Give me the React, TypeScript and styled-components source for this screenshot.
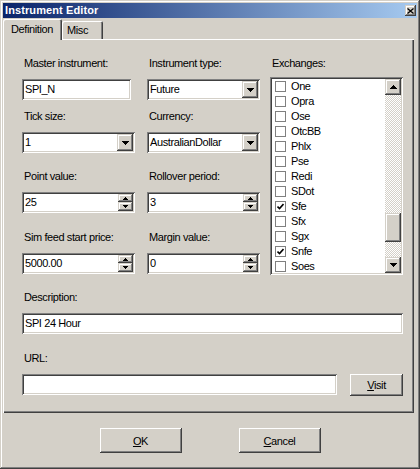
import React from 'react';
import styled, { createGlobalStyle } from 'styled-components';

const FACE = '#d4d0c8';
const SHADOW = '#808080';
const DARK = '#404040';
const LIGHT = '#ffffff';

const raised = `box-shadow: inset -1px -1px ${DARK}, inset 1px 1px ${LIGHT}, inset -2px -2px ${SHADOW}, inset 2px 2px ${FACE};`;
const raisedSmall = `box-shadow: inset -1px -1px ${DARK}, inset 1px 1px ${FACE}, inset -2px -2px ${SHADOW}, inset 2px 2px ${LIGHT};`;
const sunken = `box-shadow: inset 1px 1px ${SHADOW}, inset -1px -1px ${LIGHT}, inset 2px 2px ${DARK}, inset -2px -2px ${FACE};`;

const GlobalStyle = createGlobalStyle`
  html, body {
    margin: 0;
    padding: 0;
    background: ${FACE};
    overflow: hidden;
  }
  * {
    box-sizing: border-box;
  }
`;

const Window = styled.div`
  width: 420px;
  height: 469px;
  padding: 3px;
  display: flex;
  flex-direction: column;
  background: ${FACE};
  box-shadow: inset -1px -1px ${DARK}, inset 1px 1px ${FACE}, inset -2px -2px ${SHADOW}, inset 2px 2px ${LIGHT};
  font-family: "Liberation Sans", Arial, sans-serif;
  font-size: 11px;
  letter-spacing: -0.4px;
  color: #000;
`;

const TitleBar = styled.div`
  height: 15px;
  display: flex;
  align-items: center;
  justify-content: space-between;
  padding: 0 1px 0 2px;
  background: linear-gradient(to right, #0a246a, #a6caf0);
`;

const TitleText = styled.span`
  color: #fff;
  font-weight: bold;
  letter-spacing: 0.1px;
  line-height: 13px;
`;

const CloseBox = styled.div`
  width: 11px;
  height: 11px;
  display: flex;
  align-items: center;
  justify-content: center;
  background: ${FACE};
  ${raisedSmall}
`;

const TabStrip = styled.div`
  height: 20px;
  margin-top: 1px;
  display: flex;
  align-items: flex-end;
`;

const Tab = styled.div<{ $active?: boolean }>`
  position: relative;
  z-index: ${p => (p.$active ? 2 : 1)};
  width: ${p => (p.$active ? 59 : 41)}px;
  height: ${p => (p.$active ? 21 : 18)}px;
  margin-bottom: ${p => (p.$active ? -1 : 0)}px;
  padding: ${p => (p.$active ? '4px 0 0 8px' : '3px 0 0 5px')};
  line-height: 13px;
  background: ${FACE};
  border-radius: 2px 2px 0 0;
  box-shadow: inset 1px 1px ${LIGHT}, inset -1px 0 ${DARK}, inset -2px 0 ${SHADOW};
`;

const Panel = styled.div`
  width: 411px;
  height: 374px;
  padding: 18px 0 0 19px;
  display: flex;
  flex-direction: column;
  box-shadow: inset 1px 1px ${LIGHT}, inset -1px -1px ${DARK}, inset -2px -2px ${SHADOW};
`;

const Columns = styled.div`
  display: flex;
`;

const Column = styled.div<{ $w: number }>`
  width: ${p => p.$w}px;
  display: flex;
  flex-direction: column;
`;

const Group = styled.div<{ $gap?: number }>`
  display: flex;
  flex-direction: column;
  margin-top: ${p => p.$gap ?? 0}px;
`;

const Label = styled.span<{ $space?: number }>`
  display: block;
  line-height: 13px;
  padding-left: 2px;
  margin-bottom: ${p => p.$space ?? 9}px;
  white-space: nowrap;
`;

const TextBox = styled.div<{ $w: number }>`
  width: ${p => p.$w}px;
  height: 21px;
  padding: 2px 3px;
  line-height: 17px;
  background: #fff;
  white-space: nowrap;
  overflow: hidden;
  ${sunken}
`;

const Field = styled.div<{ $w: number }>`
  width: ${p => p.$w}px;
  height: 21px;
  padding: 2px;
  display: flex;
  background: #fff;
  ${sunken}
`;

const FieldValue = styled.span`
  flex: 1;
  padding-left: 1px;
  line-height: 17px;
  white-space: nowrap;
  overflow: hidden;
`;

const DropButton = styled.div`
  width: 16px;
  height: 17px;
  display: flex;
  align-items: center;
  justify-content: center;
  background: ${FACE};
  ${raisedSmall}
`;

const SpinButtons = styled.div`
  width: 15px;
  display: flex;
  flex-direction: column;
`;

const SpinButton = styled.div<{ $h: number }>`
  height: ${p => p.$h}px;
  display: flex;
  align-items: center;
  justify-content: center;
  background: ${FACE};
  ${raisedSmall}
`;

const ListBox = styled.div`
  width: 133px;
  height: 198px;
  padding: 2px;
  display: flex;
  background: #fff;
  ${sunken}
`;

const Items = styled.div`
  flex: 1;
  overflow: hidden;
`;

const Item = styled.div`
  height: 15px;
  display: flex;
  align-items: center;
  gap: 5px;
  padding-left: 3px;
  line-height: 15px;
`;

const CheckBox = styled.span`
  width: 11px;
  height: 11px;
  display: flex;
  align-items: center;
  justify-content: center;
  border: 1px solid ${SHADOW};
  background: #fff;
`;

const ScrollBar = styled.div`
  width: 16px;
  display: flex;
  flex-direction: column;
`;

const ScrollButton = styled.div`
  height: 16px;
  display: flex;
  align-items: center;
  justify-content: center;
  background: ${FACE};
  ${raisedSmall}
`;

const Track = styled.div`
  flex: 1;
  display: flex;
  flex-direction: column;
  background: repeating-conic-gradient(${FACE} 0 25%, ${LIGHT} 0 50%) 0 0 / 2px 2px;
`;

const Thumb = styled.div<{ $top: number }>`
  height: 29px;
  margin-top: ${p => p.$top}px;
  background: ${FACE};
  ${raisedSmall}
`;

const Row = styled.div`
  display: flex;
  align-items: flex-start;
  gap: 13px;
`;

const PushButton = styled.div<{ $w: number; $h: number }>`
  width: ${p => p.$w}px;
  height: ${p => p.$h}px;
  display: flex;
  align-items: center;
  justify-content: center;
  background: ${FACE};
  ${raised}
`;

const Footer = styled.div`
  padding-top: 15px;
  display: flex;
  justify-content: center;
  gap: 57px;
`;

const Arrow = ({ dir }: { dir: 'up' | 'down' }) => (
  <svg width="7" height="4" viewBox="0 0 7 4" shapeRendering="crispEdges">
    {dir === 'down' ? (
      <polygon points="0,0 7,0 3.5,4" fill="#000" />
    ) : (
      <polygon points="0,4 7,4 3.5,0" fill="#000" />
    )}
  </svg>
);

const TinyArrow = ({ dir }: { dir: 'up' | 'down' }) => (
  <svg width="5" height="3" viewBox="0 0 5 3" shapeRendering="crispEdges">
    {dir === 'down' ? (
      <polygon points="0,0 5,0 2.5,3" fill="#000" />
    ) : (
      <polygon points="0,3 5,3 2.5,0" fill="#000" />
    )}
  </svg>
);

const Combo = ({ w, value }: { w: number; value: string }) => (
  <Field $w={w}>
    <FieldValue>{value}</FieldValue>
    <DropButton>
      <Arrow dir="down" />
    </DropButton>
  </Field>
);

const Spin = ({ w, value }: { w: number; value: string }) => (
  <Field $w={w}>
    <FieldValue style={{ paddingLeft: 1 }}>{value}</FieldValue>
    <SpinButtons>
      <SpinButton $h={8}>
        <TinyArrow dir="up" />
      </SpinButton>
      <SpinButton $h={9}>
        <TinyArrow dir="down" />
      </SpinButton>
    </SpinButtons>
  </Field>
);

const exchanges = [
  { name: 'One', checked: false },
  { name: 'Opra', checked: false },
  { name: 'Ose', checked: false },
  { name: 'OtcBB', checked: false },
  { name: 'Phlx', checked: false },
  { name: 'Pse', checked: false },
  { name: 'Redi', checked: false },
  { name: 'SDot', checked: false },
  { name: 'Sfe', checked: true },
  { name: 'Sfx', checked: false },
  { name: 'Sgx', checked: false },
  { name: 'Snfe', checked: true },
  { name: 'Soes', checked: false },
];

export default function App() {
  return (
    <>
      <GlobalStyle />
      <Window>
        <TitleBar>
          <TitleText>Instrument Editor</TitleText>
          <CloseBox>
            <svg width="7" height="6" viewBox="0 0 7 6">
              <path d="M0.5 0.5 L6.5 5.5 M6.5 0.5 L0.5 5.5" stroke="#000" strokeWidth="1.3" />
            </svg>
          </CloseBox>
        </TitleBar>

        <TabStrip>
          <Tab $active>Definition</Tab>
          <Tab>Misc</Tab>
        </TabStrip>

        <Panel>
          <Columns>
            <Column $w={125}>
              <Group>
                <Label>Master instrument:</Label>
                <TextBox $w={109}>SPI_N</TextBox>
              </Group>
              <Group $gap={10}>
                <Label>Tick size:</Label>
                <Combo w={113} value="1" />
              </Group>
              <Group $gap={17}>
                <Label>Point value:</Label>
                <Spin w={113} value="25" />
              </Group>
              <Group $gap={18}>
                <Label>Sim feed start price:</Label>
                <Spin w={113} value="5000.00" />
              </Group>
            </Column>

            <Column $w={123}>
              <Group>
                <Label>Instrument type:</Label>
                <Combo w={113} value="Future" />
              </Group>
              <Group $gap={10}>
                <Label>Currency:</Label>
                <Combo w={113} value="AustralianDollar" />
              </Group>
              <Group $gap={17}>
                <Label>Rollover period:</Label>
                <Spin w={113} value="3" />
              </Group>
              <Group $gap={18}>
                <Label>Margin value:</Label>
                <Spin w={113} value="0" />
              </Group>
            </Column>

            <Column $w={133}>
              <Group>
                <Label $space={7}>Exchanges:</Label>
                <ListBox>
                  <Items>
                    {exchanges.map(ex => (
                      <Item key={ex.name}>
                        <CheckBox>
                          {ex.checked && (
                            <svg width="7" height="7" viewBox="0 0 7 7">
                              <path d="M0.5 3.5 L2.5 5.5 L6.5 1" stroke="#000" strokeWidth="1.6" fill="none" />
                            </svg>
                          )}
                        </CheckBox>
                        {ex.name}
                      </Item>
                    ))}
                  </Items>
                  <ScrollBar>
                    <ScrollButton>
                      <Arrow dir="up" />
                    </ScrollButton>
                    <Track>
                      <Thumb $top={118} />
                    </Track>
                    <ScrollButton>
                      <Arrow dir="down" />
                    </ScrollButton>
                  </ScrollBar>
                </ListBox>
              </Group>
            </Column>
          </Columns>

          <Group $gap={16}>
            <Label>Description:</Label>
            <TextBox $w={381}>SPI 24 Hour</TextBox>
          </Group>

          <Group $gap={18}>
            <Label>URL:</Label>
            <Row>
              <TextBox $w={315} />
              <PushButton $w={53} $h={22}>
                <span>
                  <u>V</u>isit
                </span>
              </PushButton>
            </Row>
          </Group>
        </Panel>

        <Footer>
          <PushButton $w={82} $h={25}>
            <span>
              <u>O</u>K
            </span>
          </PushButton>
          <PushButton $w={82} $h={25}>
            <span>
              <u>C</u>ancel
            </span>
          </PushButton>
        </Footer>
      </Window>
    </>
  );
}
